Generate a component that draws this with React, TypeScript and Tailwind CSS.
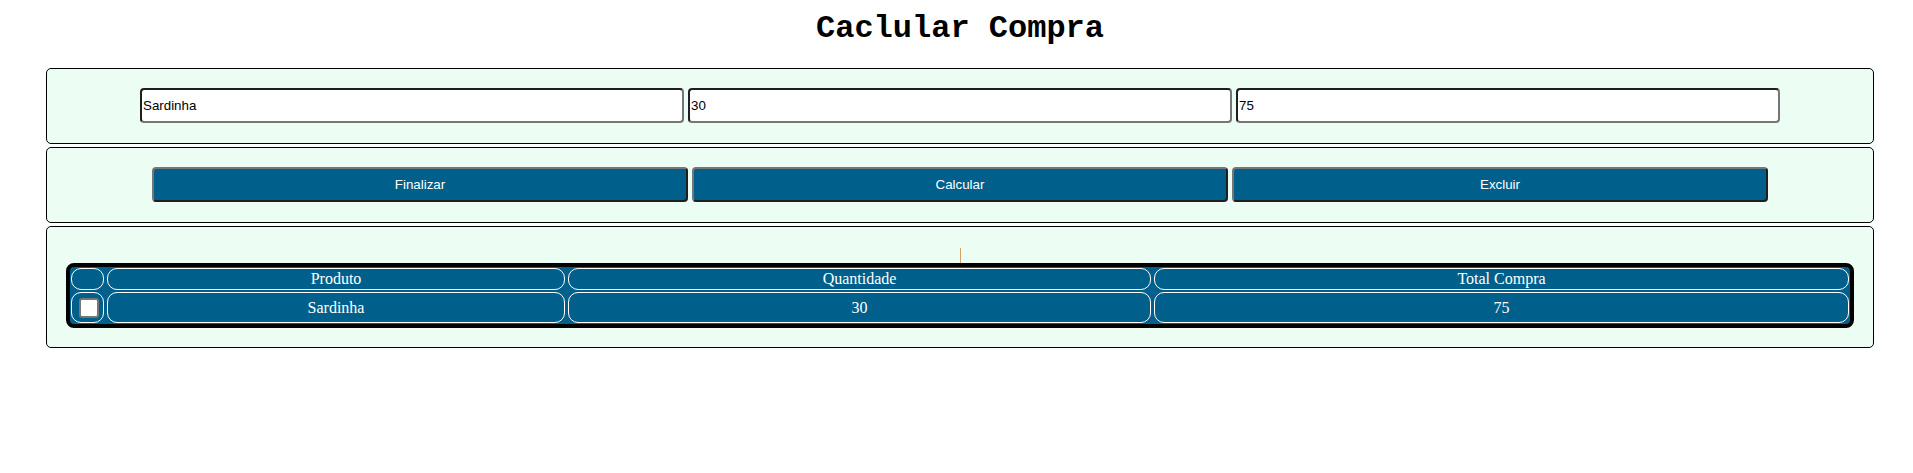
import { useState } from "react";

type Item = { produto: string; quantidade: number; total: number };

const INPUT_CLASS =
  "h-[35px] w-[544px] rounded-[4px] border-2 border-t-[#1f1f1f] border-l-[#1f1f1f] border-b-[#767676] border-r-[#767676] bg-white px-[1px] text-[13.33px] text-black outline-none";

const BUTTON_CLASS =
  "h-[35px] w-[536px] rounded-[4px] border-2 border-t-[#767676] border-l-[#767676] border-b-[#1f1f1f] border-r-[#1f1f1f] bg-[#01608b] text-[13.33px] text-white";

const CELL_CLASS =
  "flex items-center justify-center rounded-[10px] border border-white text-[16px] text-white";

export default function App() {
  const [produto, setProduto] = useState("Sardinha");
  const [quantidade, setQuantidade] = useState("30");
  const [total, setTotal] = useState("75");
  const [items] = useState<Item[]>([{ produto: "Sardinha", quantidade: 30, total: 75 }]);

  return (
    <div className="min-h-screen bg-white pl-[46px] pr-[39px] font-['Liberation_Sans',Arial,sans-serif]">
      <h1 className="pt-[11px] text-center font-['Liberation_Mono','Courier_New',monospace] text-[32px] font-bold leading-[36px] text-black">
        Caclular Compra
      </h1>

      <div className="mt-[21px] flex flex-col gap-[3px]">
        {/* campos */}
        <section className="flex justify-center gap-1 rounded-[5px] border border-black bg-[#ecfef3] pt-[19px] pb-[20px]">
          <input
            type="text"
            value={produto}
            onChange={(e) => setProduto(e.target.value)}
            className={INPUT_CLASS}
          />
          <input
            type="text"
            value={quantidade}
            onChange={(e) => setQuantidade(e.target.value)}
            className={INPUT_CLASS}
          />
          <input
            type="text"
            value={total}
            onChange={(e) => setTotal(e.target.value)}
            className={INPUT_CLASS}
          />
        </section>

        {/* acoes */}
        <section className="flex justify-center gap-1 rounded-[5px] border border-black bg-[#ecfef3] pt-[19px] pb-[20px]">
          <button type="button" className={BUTTON_CLASS}>
            Finalizar
          </button>
          <button type="button" className={BUTTON_CLASS}>
            Calcular
          </button>
          <button type="button" className={BUTTON_CLASS}>
            Excluir
          </button>
        </section>

        {/* lista */}
        <section className="rounded-[5px] border border-black bg-[#ecfef3] px-[19px] pt-[21px] pb-[19px]">
          <div className="mx-auto h-[15px] w-px bg-[#cfa46e]" />
          <div className="rounded-[8px] border-4 border-black bg-[#01608b] p-[1px] font-['Liberation_Serif','Times_New_Roman',serif]">
            <div className="grid grid-cols-[33px_458px_583px_1fr] gap-x-[3px] gap-y-[2px]">
              <div className={`${CELL_CLASS} h-[22px]`} />
              <div className={`${CELL_CLASS} h-[22px]`}>Produto</div>
              <div className={`${CELL_CLASS} h-[22px]`}>Quantidade</div>
              <div className={`${CELL_CLASS} h-[22px]`}>Total Compra</div>
              {items.map((item) => (
                <div key={item.produto} className="contents">
                  <div className={`${CELL_CLASS} h-[31px]`}>
                    <input
                      type="checkbox"
                      className="ml-[3px] h-5 w-5 appearance-none rounded-[3px] border-2 border-[#767676] bg-white"
                    />
                  </div>
                  <div className={`${CELL_CLASS} h-[31px]`}>{item.produto}</div>
                  <div className={`${CELL_CLASS} h-[31px]`}>{item.quantidade}</div>
                  <div className={`${CELL_CLASS} h-[31px]`}>{item.total}</div>
                </div>
              ))}
            </div>
          </div>
        </section>
      </div>
    </div>
  );
}
